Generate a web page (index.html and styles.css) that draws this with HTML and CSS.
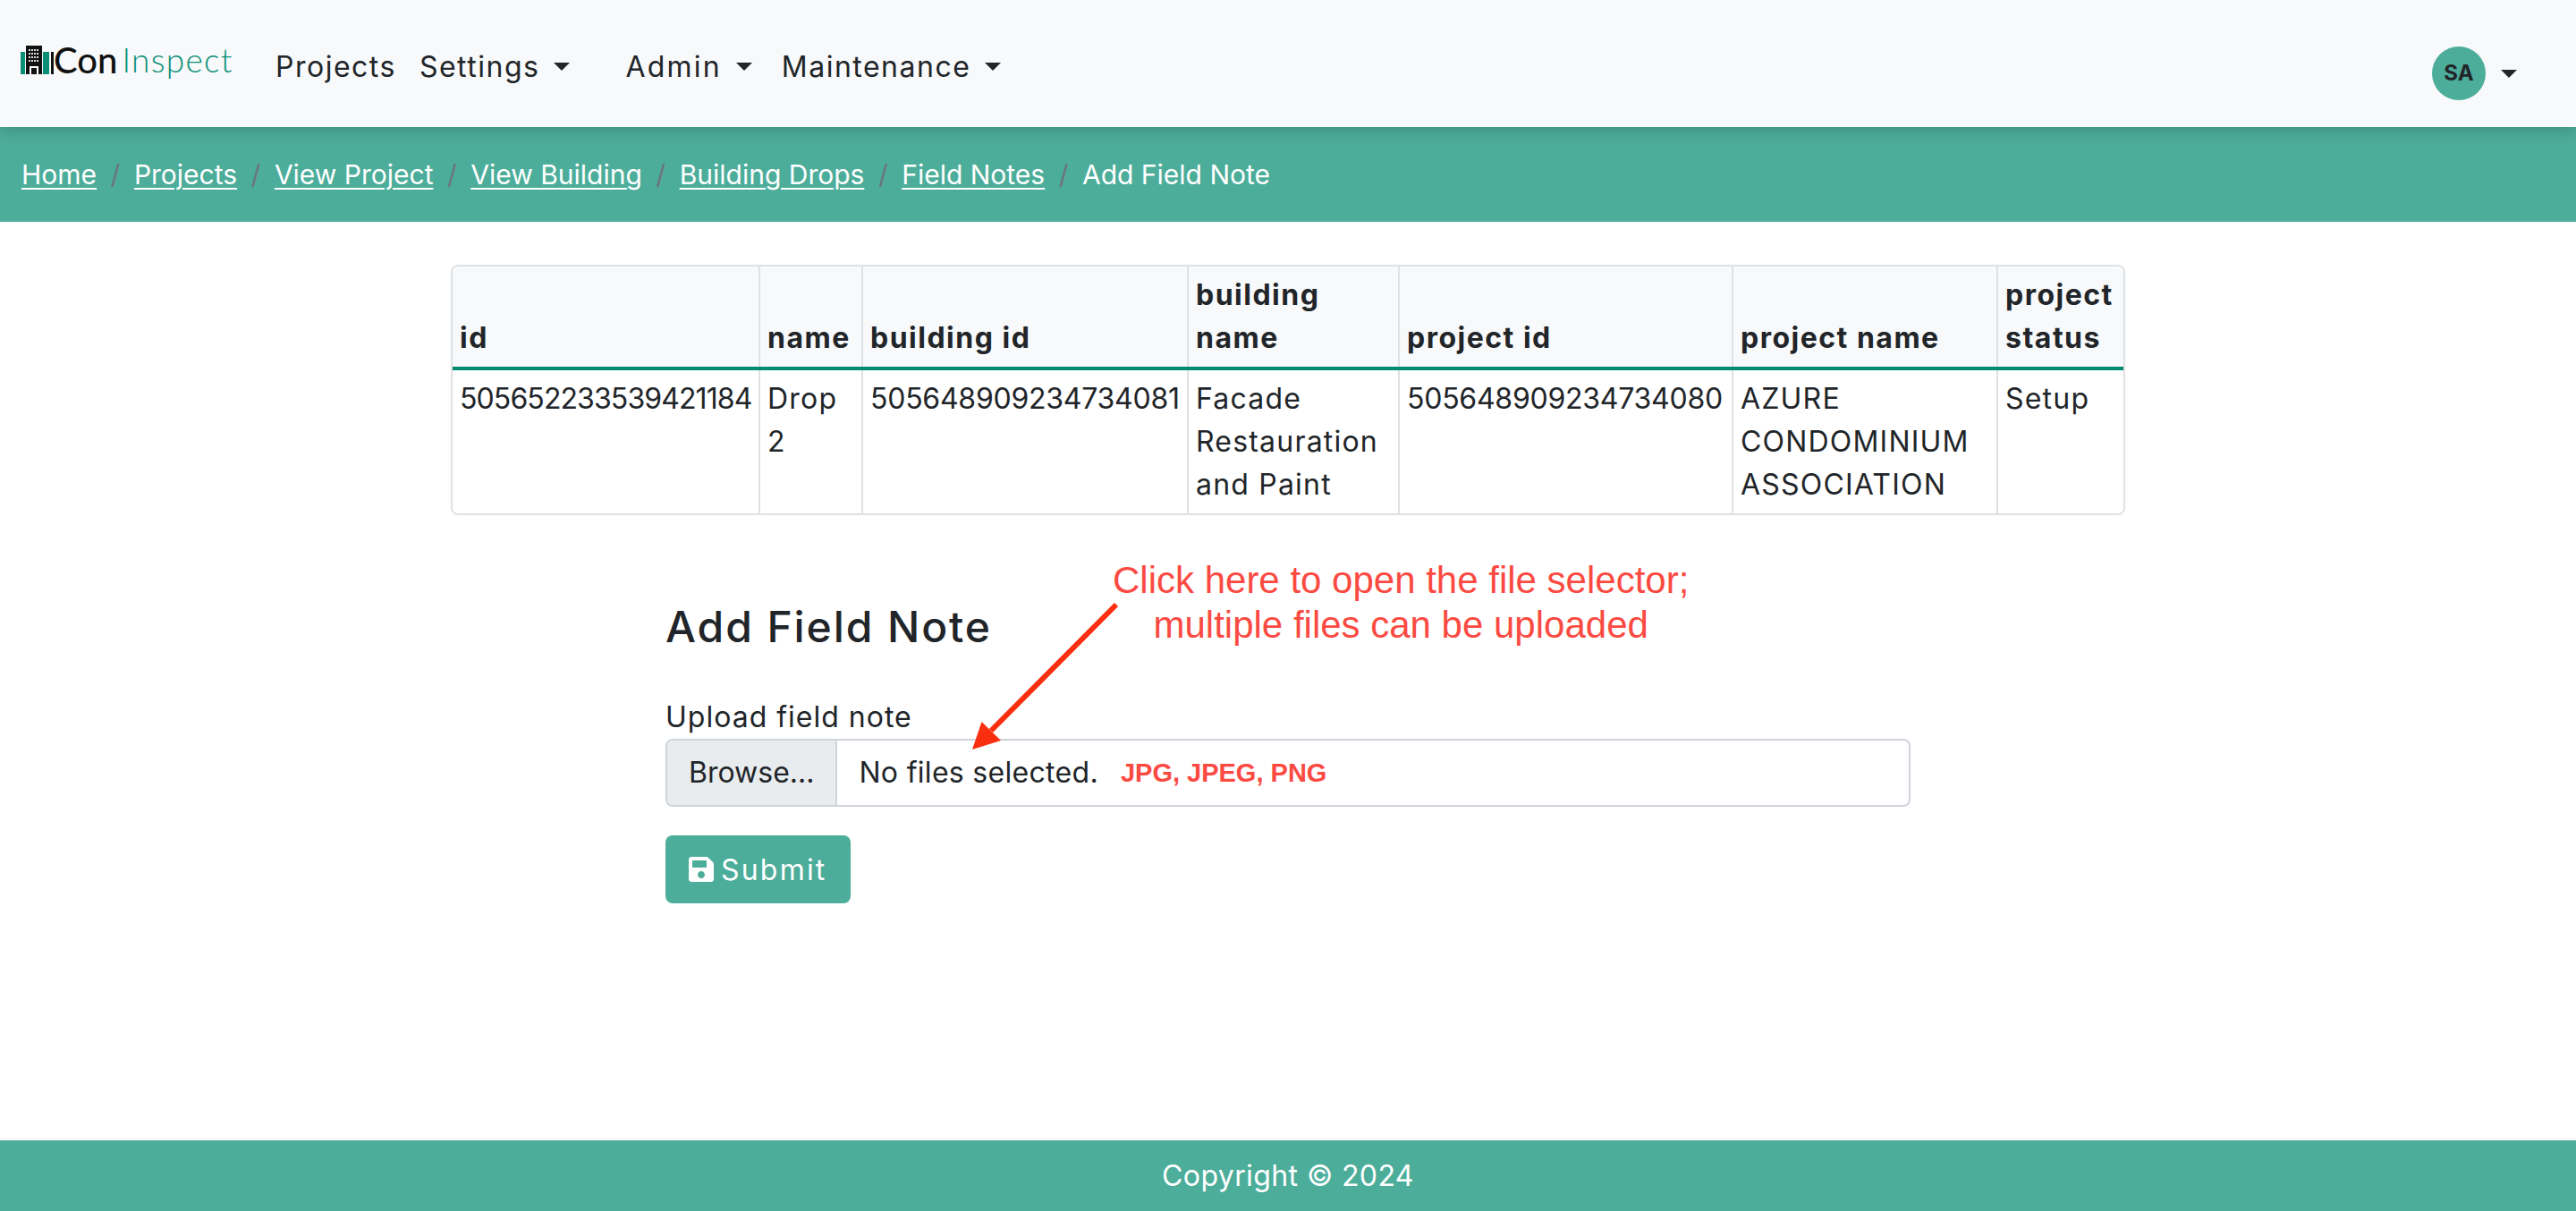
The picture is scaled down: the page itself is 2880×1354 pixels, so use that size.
FILE: index.html
```html
<!DOCTYPE html>
<html>
<head>
  <title>Add Field Note</title>
  <link rel="stylesheet" href="styles.css">
</head>
<body>
  <nav class="navbar">
    <a class="brand">
      <svg class="brand-icon" viewBox="0 0 37 32" width="37" height="32">
        <rect x="0" y="7" width="5" height="25" fill="#0a8f77"/>
        <rect x="25" y="7" width="7" height="25" fill="#0a8f77"/>
        <rect x="34" y="7" width="3" height="25" fill="#111"/>
        <rect x="6" y="0" width="18" height="32" fill="#111"/>
        <g fill="#ddd">
          <rect x="9" y="4" width="2" height="2"/><rect x="12" y="4" width="2" height="2"/><rect x="15" y="4" width="2" height="2"/><rect x="18" y="4" width="2" height="2"/>
          <rect x="9" y="8" width="2" height="2"/><rect x="12" y="8" width="2" height="2"/><rect x="15" y="8" width="2" height="2"/><rect x="18" y="8" width="2" height="2"/>
          <rect x="9" y="12" width="2" height="2"/><rect x="12" y="12" width="2" height="2"/><rect x="15" y="12" width="2" height="2"/><rect x="18" y="12" width="2" height="2"/>
          <rect x="9" y="16" width="2" height="2"/><rect x="12" y="16" width="2" height="2"/><rect x="15" y="16" width="2" height="2"/><rect x="18" y="16" width="2" height="2"/>
        </g>
        <rect x="10" y="23" width="10" height="9" fill="#fff"/>
        <rect x="12" y="25" width="6" height="7" fill="#111"/>
      </svg>
      <span class="brand-con">Con</span><span class="brand-inspect">Inspect</span>
    </a>
    <ul class="nav-links">
      <li class="nav-projects">Projects</li>
      <li class="nav-settings">Settings<span class="caret"></span></li>
      <li class="nav-admin">Admin<span class="caret"></span></li>
      <li>Maintenance<span class="caret"></span></li>
    </ul>
    <div class="user-menu">
      <span class="avatar">SA</span><span class="caret"></span>
    </div>
  </nav>

  <div class="breadcrumb">
    <a href="#">Home</a><span class="sep">/</span>
    <a href="#">Projects</a><span class="sep">/</span>
    <a href="#">View Project</a><span class="sep">/</span>
    <a href="#">View Building</a><span class="sep">/</span>
    <a href="#">Building Drops</a><span class="sep">/</span>
    <a href="#">Field Notes</a><span class="sep">/</span>
    <span>Add Field Note</span>
  </div>

  <main class="content">
    <div class="table-wrap">
      <table>
        <colgroup>
          <col class="col-id">
          <col class="col-name">
          <col class="col-building-id">
          <col class="col-building-name">
          <col class="col-project-id">
          <col class="col-project-name">
          <col class="col-status">
        </colgroup>
        <thead>
          <tr>
            <th>id</th>
            <th>name</th>
            <th>building id</th>
            <th>building name</th>
            <th>project id</th>
            <th>project name</th>
            <th>project status</th>
          </tr>
        </thead>
        <tbody>
          <tr>
            <td class="num">505652233539421184</td>
            <td>Drop 2</td>
            <td class="num-long">505648909234734081</td>
            <td>Facade Restauration and Paint</td>
            <td class="num-long">505648909234734080</td>
            <td>AZURE CONDOMINIUM ASSOCIATION</td>
            <td>Setup</td>
          </tr>
        </tbody>
      </table>
    </div>

    <section class="form-section">
      <h4>Add Field Note</h4>
      <form>
        <label class="field-label">Upload field note</label>
        <div class="file-input">
          <span class="file-browse">Browse...</span>
          <span class="file-name">No files selected.</span>
          <span class="file-types">JPG, JPEG, PNG</span>
        </div>
        <button type="button" class="btn-submit">
          <svg viewBox="0 0 448 512" width="28" height="32"><path fill="#fff" d="M433.941 129.941l-83.882-83.882A48 48 0 0 0 316.118 32H48C21.49 32 0 53.49 0 80v352c0 26.51 21.49 48 48 48h352c26.51 0 48-21.49 48-48V163.882a48 48 0 0 0-14.059-33.941zM224 416c-35.346 0-64-28.654-64-64 0-35.346 28.654-64 64-64s64 28.654 64 64c0 35.346-28.654 64-64 64zm96-304.52V212c0 6.627-5.373 12-12 12H76c-6.627 0-12-5.373-12-12V108c0-6.627 5.373-12 12-12h228.52c3.183 0 6.235 1.264 8.485 3.515l3.48 3.48A11.996 11.996 0 0 1 320 111.48z"/></svg>
          Submit
        </button>
      </form>

      <!-- annotation drawn over the form -->
      <div class="note">Click here to open the file selector;<br>multiple files can be uploaded</div>
      <svg class="note-arrow" viewBox="0 0 175 175" width="175" height="175">
        <line x1="168" y1="5" x2="28" y2="146" stroke="#fa2f10" stroke-width="6"/>
        <polygon points="7,167 17.5,136 39,157" fill="#fa2f10"/>
      </svg>
    </section>
  </main>

  <footer class="footer">Copyright © 2024</footer>
</body>
</html>
```

FILE: styles.css
```css
html, body {
  margin: 0;
  padding: 0;
}

body {
  font-family: Inter, "Noto Sans", sans-serif;
  font-size: 32px;
  line-height: 48px;
  color: #212529;
  background-color: #fff;
  min-height: 1354px;
  display: flex;
  flex-direction: column;
}

.navbar {
  height: 142px;
  background-color: #f8f9fa;
  display: flex;
  align-items: center;
  padding: 0 66px 0 23px;
  box-shadow: 0 4px 16px rgba(0, 0, 0, 0.18);
  position: relative;
}

.brand {
  display: flex;
  align-items: center;
  width: 285px;
  margin-top: -8px;
  font-family: Lato, sans-serif;
  font-size: 40px;
  line-height: 48px;
}

.brand-icon {
  flex: none;
}

.brand-con {
  color: #111;
  font-weight: 500;
}

.brand-inspect {
  color: #0a8f77;
  font-size: 37px;
  font-weight: 300;
  letter-spacing: 1.3px;
  margin-left: 5px;
}

.nav-links {
  list-style: none;
  margin: 7px 0 0;
  padding: 0;
  display: flex;
  letter-spacing: 1.5px;
}

.nav-links li {
  display: flex;
  align-items: center;
}

.nav-projects {
  margin-right: 26px;
}

.nav-settings {
  margin-right: 62px;
}

.nav-admin {
  margin-right: 33px;
  letter-spacing: 2.2px;
}

.caret {
  display: inline-block;
  width: 0;
  height: 0;
  margin-left: 16px;
  border-top: 9px solid #212529;
  border-left: 9px solid transparent;
  border-right: 9px solid transparent;
}

.user-menu {
  margin-left: auto;
  margin-top: 22px;
  display: flex;
  align-items: center;
}

.avatar {
  width: 60px;
  height: 60px;
  border-radius: 50%;
  background-color: #4cad9a;
  font-size: 24px;
  font-weight: 700;
  display: flex;
  align-items: center;
  justify-content: center;
}

.user-menu .caret {
  margin-left: 17px;
}

.breadcrumb {
  height: 106px;
  background-color: #4cad9a;
  color: #fff;
  display: flex;
  align-items: center;
  padding: 0 24px;
  font-size: 30px;
}

.breadcrumb a {
  color: #fff;
  text-decoration: underline;
  text-underline-offset: 4px;
  text-decoration-thickness: 2px;
}

.sep {
  color: #6c757d;
  margin: 0 15.5px;
}

.content {
  flex: 1;
}

.table-wrap {
  width: 1872px;
  margin: 48px auto 0;
  border: 2px solid #dee2e6;
  border-radius: 8px;
  overflow: hidden;
  box-sizing: border-box;
}

table {
  width: 100%;
  border-collapse: collapse;
  table-layout: fixed;
}

.col-id { width: 343px; }
.col-name { width: 115px; }
.col-building-id { width: 364px; }
.col-building-name { width: 236px; }
.col-project-id { width: 373px; }
.col-project-name { width: 296px; }

th, td {
  padding: 8px;
  text-align: left;
  vertical-align: top;
  border-left: 2px solid #dee2e6;
  letter-spacing: 1.2px;
}

th:first-child, td:first-child {
  border-left: none;
}

th {
  vertical-align: bottom;
  font-weight: 700;
  letter-spacing: 1.5px;
  background-color: #f8f9fa;
  border-bottom: 4px solid #008a70;
}

td.num {
  letter-spacing: -0.9px;
}

td.num-long {
  letter-spacing: -0.25px;
}

.form-section {
  position: relative;
  width: 1392px;
  margin: 0 auto;
  padding-top: 96px;
}

h4 {
  margin: 0 0 48px;
  font-size: 48px;
  line-height: 58px;
  font-weight: 500;
  letter-spacing: 1.9px;
}

.field-label {
  display: block;
  line-height: 48px;
  letter-spacing: 1px;
}

.file-input {
  display: flex;
  align-items: center;
  height: 76px;
  box-sizing: border-box;
  border: 2px solid #ced4da;
  border-radius: 8px;
  overflow: hidden;
}

.file-browse {
  display: flex;
  align-items: center;
  height: 100%;
  padding: 0 24px;
  background-color: #e9ecef;
  border-right: 2px solid #ced4da;
}

.file-name {
  margin-left: 24px;
  letter-spacing: 0.3px;
}

.file-types {
  margin-left: 25px;
  font-family: "Liberation Sans", Arial, sans-serif;
  font-size: 29px;
  font-weight: 700;
  color: #fb4a42;
}

.btn-submit {
  display: flex;
  align-items: center;
  gap: 8px;
  margin-top: 32px;
  height: 76px;
  padding: 0 26px;
  border: none;
  border-radius: 8px;
  background-color: #4cad9a;
  color: #fff;
  font-family: inherit;
  font-size: 32px;
  letter-spacing: 2.2px;
}

.note {
  position: absolute;
  left: 500px;
  top: 48px;
  font-family: "Liberation Sans", Arial, sans-serif;
  font-size: 42px;
  line-height: 50px;
  color: #fb4a42;
  text-align: center;
}

.note-arrow {
  position: absolute;
  left: 336px;
  top: 95px;
}

.footer {
  height: 79px;
  background-color: #4cad9a;
  color: #fff;
  display: flex;
  align-items: center;
  justify-content: center;
  letter-spacing: 0.4px;
}
```
